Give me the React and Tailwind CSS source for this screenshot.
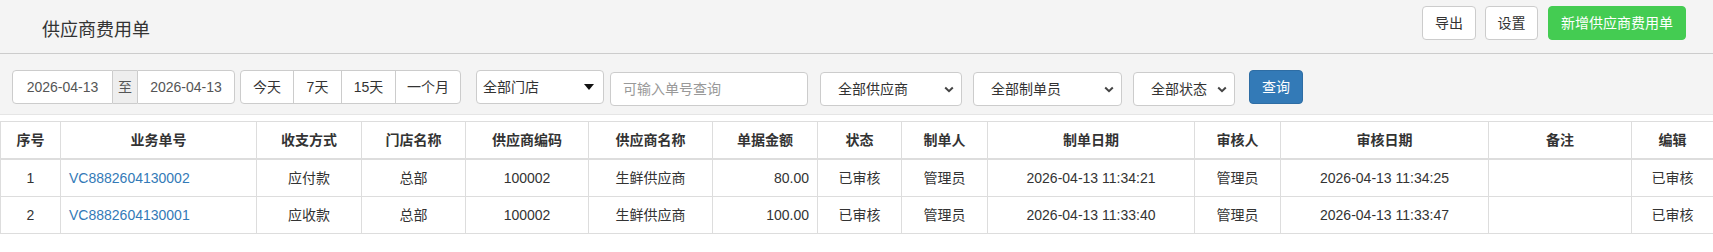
import React from 'react';

const font = { fontFamily: '"Liberation Sans", "Noto Sans CJK SC", sans-serif' };

const cols = [
  { key: 'no', title: '序号', w: 60 },
  { key: 'code', title: '业务单号', w: 196 },
  { key: 'pay', title: '收支方式', w: 105 },
  { key: 'store', title: '门店名称', w: 104 },
  { key: 'scode', title: '供应商编码', w: 123 },
  { key: 'sname', title: '供应商名称', w: 124 },
  { key: 'amount', title: '单据金额', w: 105 },
  { key: 'status', title: '状态', w: 84 },
  { key: 'maker', title: '制单人', w: 86 },
  { key: 'mdate', title: '制单日期', w: 207 },
  { key: 'auditor', title: '审核人', w: 86 },
  { key: 'adate', title: '审核日期', w: 208 },
  { key: 'remark', title: '备注', w: 143 },
  { key: 'edit', title: '编辑', w: 82 },
];

const rows = [
  {
    no: '1', code: 'VC8882604130002', pay: '应付款', store: '总部', scode: '100002', sname: '生鲜供应商',
    amount: '80.00', status: '已审核', maker: '管理员', mdate: '2026-04-13 11:34:21', auditor: '管理员',
    adate: '2026-04-13 11:34:25', remark: '', edit: '已审核',
  },
  {
    no: '2', code: 'VC8882604130001', pay: '应收款', store: '总部', scode: '100002', sname: '生鲜供应商',
    amount: '100.00', status: '已审核', maker: '管理员', mdate: '2026-04-13 11:33:40', auditor: '管理员',
    adate: '2026-04-13 11:33:47', remark: '', edit: '已审核',
  },
];

function Chevron() {
  return (
    <svg width="10" height="7" viewBox="0 0 10 7" className="shrink-0">
      <path d="M1.2 1.5L5 5.2L8.8 1.5" fill="none" stroke="#444" strokeWidth="2" />
    </svg>
  );
}

function NativeSelect({ label, className }) {
  return (
    <div
      className={`flex h-[34px] items-center justify-between rounded-[4px] border border-[#ccc] bg-white pl-[17px] pr-[7px] text-[14px] text-[#333] ${className}`}
    >
      <span>{label}</span>
      <Chevron />
    </div>
  );
}

export default function App() {
  return (
    <div className="min-h-[252px] w-[1713px] bg-white text-[14px] text-[#333]" style={font}>
      {/* top bar */}
      <div className="flex h-[54px] items-start justify-between border-b border-[#ccc] bg-[#f4f4f4] pl-[42px] pr-[27px]">
        <div className="pt-[19px] text-[18px] leading-[22px] text-[#333]">供应商费用单</div>
        <div className="flex items-center pt-[6px]">
          <button className="h-[34px] w-[54px] rounded-[4px] border border-[#ccc] bg-white text-[14px] text-[#333]">
            导出
          </button>
          <button className="ml-[9px] h-[34px] w-[53px] rounded-[4px] border border-[#ccc] bg-white text-[14px] text-[#333]">
            设置
          </button>
          <button className="ml-[10px] h-[34px] w-[138px] rounded-[4px] border border-[#44cc52] bg-[#44cc52] text-[14px] text-white">
            新增供应商费用单
          </button>
        </div>
      </div>

      {/* filters */}
      <div className="flex h-[61px] items-start border-b border-[#e5e5e5] bg-[#f4f4f4] pl-[12px] pt-[16px]">
        <div className="flex h-[34px] items-stretch">
          <div className="flex w-[101px] items-center justify-center rounded-l-[4px] border border-[#ccc] bg-white text-[#555]">
            2026-04-13
          </div>
          <div className="flex w-[24px] items-center justify-center border-y border-[#ccc] bg-[#eee] text-[#555]">
            至
          </div>
          <div className="flex w-[98px] items-center justify-center rounded-r-[4px] border border-[#ccc] bg-white text-[#555]">
            2026-04-13
          </div>
        </div>

        <div className="ml-[5px] flex h-[34px] items-stretch rounded-[4px] border border-[#ccc] bg-white">
          <div className="flex w-[52px] items-center justify-center">今天</div>
          <div className="flex w-[48px] items-center justify-center border-l border-[#ccc]">7天</div>
          <div className="flex w-[54px] items-center justify-center border-l border-[#ccc]">15天</div>
          <div className="flex w-[65px] items-center justify-center border-l border-[#ccc]">一个月</div>
        </div>

        <div className="ml-[15px] flex h-[34px] w-[128px] items-center justify-between rounded-[4px] border border-[#ccc] bg-white pl-[6px] pr-[9px]">
          <span>全部门店</span>
          <svg width="10" height="6" viewBox="0 0 10 6">
            <polygon points="0,0 10,0 5,6" fill="#111" />
          </svg>
        </div>

        <div className="ml-[6px] mt-[2px] flex h-[34px] w-[198px] items-center rounded-[4px] border border-[#ccc] bg-white pl-[12px] text-[#999]">
          可输入单号查询
        </div>

        <NativeSelect label="全部供应商" className="ml-[12px] mt-[2px] w-[142px]" />
        <NativeSelect label="全部制单员" className="ml-[11px] mt-[2px] w-[149px]" />
        <NativeSelect label="全部状态" className="ml-[11px] mt-[2px] w-[102px]" />

        <button className="ml-[14px] h-[34px] w-[54px] rounded-[4px] border border-[#2e6da4] bg-[#337ab7] text-[14px] text-white">
          查询
        </button>
      </div>

      {/* table */}
      <div className="pt-[6px]">
        <table className="w-[1713px] table-fixed border-collapse">
          <colgroup>
            {cols.map((c) => (
              <col key={c.key} style={{ width: c.w }} />
            ))}
          </colgroup>
          <thead>
            <tr>
              {cols.map((c) => (
                <th
                  key={c.key}
                  className="border border-b-2 border-[#ddd] px-[8px] py-[8px] text-center text-[14px] font-bold leading-[20px] text-[#333]"
                >
                  {c.title}
                </th>
              ))}
            </tr>
          </thead>
          <tbody>
            {rows.map((r) => (
              <tr key={r.no}>
                {cols.map((c) => (
                  <td
                    key={c.key}
                    className={`border border-[#ddd] px-[8px] py-[8px] leading-[20px] ${
                      c.key === 'code' ? 'text-left text-[#337ab7]' : c.key === 'amount' ? 'text-right' : 'text-center'
                    }`}
                  >
                    {r[c.key]}
                  </td>
                ))}
              </tr>
            ))}
          </tbody>
        </table>
      </div>
    </div>
  );
}
